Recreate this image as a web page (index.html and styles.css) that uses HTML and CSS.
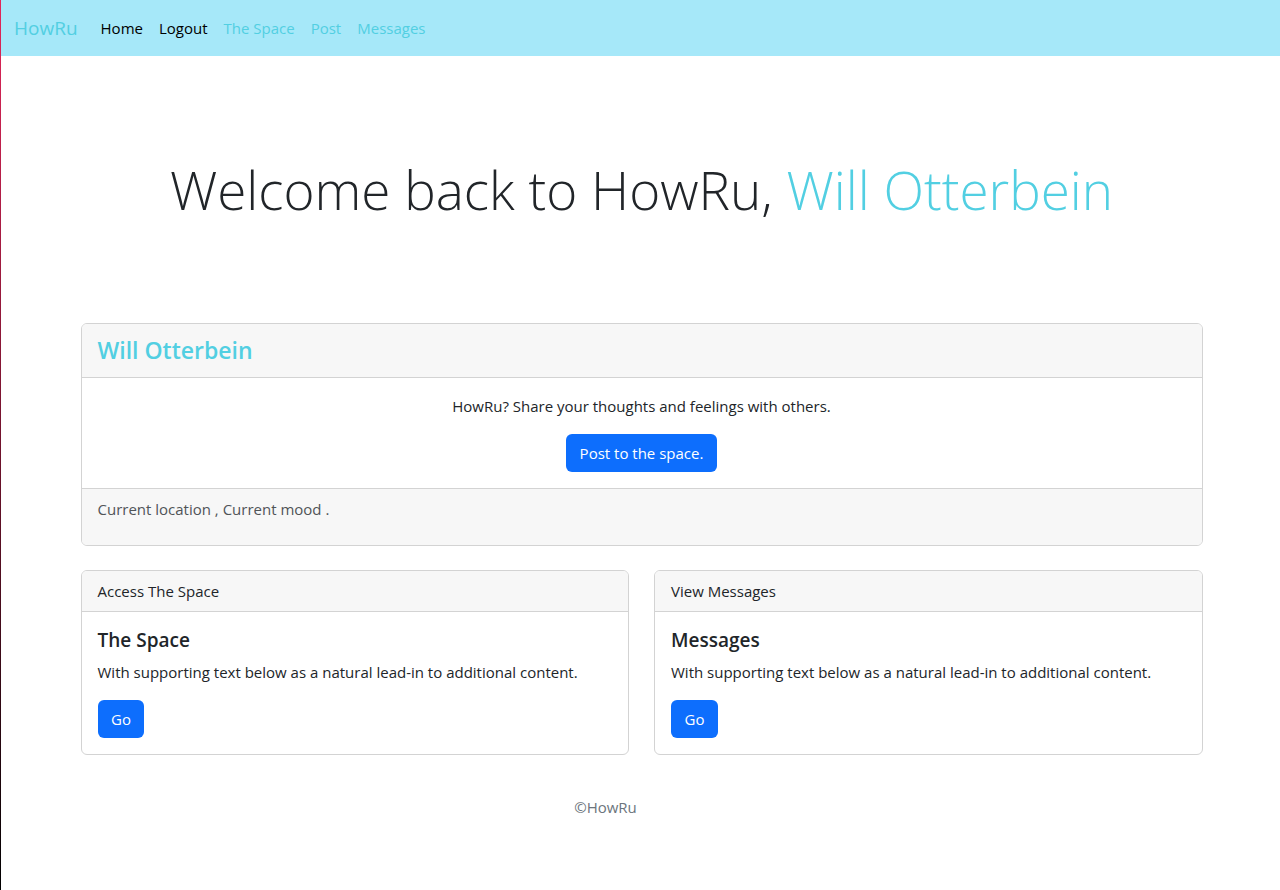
FILE: index.html
```html
<!DOCTYPE html>
<html lang="en">
<head>
<meta charset="utf-8">
<title>HowRu</title>
<link rel="stylesheet" href="styles.css">
</head>
<body>
<nav class="navbar">
  <a class="brand" href="#">HowRu</a>
  <ul class="nav-links">
    <li><a class="link dark" href="#">Home</a></li>
    <li><a class="link dark" href="#">Logout</a></li>
    <li><a class="link info" href="#">The Space</a></li>
    <li><a class="link info" href="#">Post</a></li>
    <li><a class="link info" href="#">Messages</a></li>
  </ul>
</nav>

<header class="hero">
  <h1 class="display">Welcome back to HowRu, <span class="info-text">Will Otterbein</span></h1>
</header>

<main class="container">
  <section class="card">
    <div class="card-header">
      <h3 class="user-name">Will Otterbein</h3>
    </div>
    <div class="card-body center">
      <p class="card-text">HowRu? Share your thoughts and feelings with others.</p>
      <a class="btn" href="#">Post to the space.</a>
    </div>
    <div class="card-footer">
      <p class="muted">Current location , Current mood .</p>
    </div>
  </section>

  <div class="row">
    <section class="card">
      <div class="card-header small">Access The Space</div>
      <div class="card-body">
        <h5 class="card-title">The Space</h5>
        <p class="card-text">With supporting text below as a natural lead-in to additional content.</p>
        <a class="btn" href="#">Go</a>
      </div>
    </section>
    <section class="card">
      <div class="card-header small">View Messages</div>
      <div class="card-body">
        <h5 class="card-title">Messages</h5>
        <p class="card-text">With supporting text below as a natural lead-in to additional content.</p>
        <a class="btn" href="#">Go</a>
      </div>
    </section>
  </div>
</main>

<footer class="site-footer">©HowRu</footer>
</body>
</html>
```

FILE: styles.css
```css
* { box-sizing: border-box; }

html, body { margin: 0; padding: 0; }

body {
  font-family: "Open Sans", "Noto Sans", "Liberation Sans", sans-serif;
  font-size: 15px;
  line-height: 24px;
  color: #212529;
  background: #fff linear-gradient(to bottom, #e3265a 0%, #000 100%) no-repeat left top / 1px 100%;
  min-height: 890px;
  padding-left: 3px;
}

a { text-decoration: none; }

.navbar {
  display: flex;
  align-items: center;
  height: 56px;
  background: #a6e8f9;
  padding: 0 12px 0 13px;
  margin-left: -2px;
}

.brand {
  font-size: 19px;
  color: #52cfe2;
  margin-right: 15px;
  line-height: 30px;
}

.nav-links {
  display: flex;
  list-style: none;
  margin: 0;
  padding: 0;
}

.link {
  display: block;
  padding: 8px;
  font-size: 15px;
}
.link.dark { color: #000; }
.link.info { color: #52cfe2; }

.info-text { color: #52cfe2; }

.hero {
  padding: 100px 0 100px;
  text-align: center;
}

.display {
  margin: 0;
  font-size: 53px;
  font-weight: 300;
  line-height: 67px;
  color: #212529;
}

.container {
  width: 1122px;
  margin: 0 auto;
}

.card {
  background: #fff;
  border: 1px solid #d3d3d3;
  border-radius: 6px;
  overflow: hidden;
  margin-bottom: 24px;
}

.card-header {
  background: #f7f7f7;
  border-bottom: 1px solid #d3d3d3;
  padding: 8px 16px;
}
.card-header.small { font-size: 15px; line-height: 24px; }

.user-name {
  margin: 0;
  font-size: 23px;
  font-weight: 600;
  line-height: 37px;
  color: #52cfe2;
}

.card-body { padding: 16px; }
.card-body.center { text-align: center; }

.card-title {
  margin: 0 0 8px;
  font-size: 19px;
  font-weight: 600;
  line-height: 24px;
}

.card-text { margin: 0 0 16px; }

.btn {
  display: inline-block;
  background: #0d6efd;
  color: #fff;
  border-radius: 6px;
  padding: 7px 13.5px;
  font-size: 15px;
  line-height: 24px;
}

.card-footer {
  background: #f7f7f7;
  border-top: 1px solid #d3d3d3;
  padding: 8px 16px;
}

.muted { margin: 0 0 16px; color: #505458; }

.row {
  display: grid;
  grid-template-columns: 1fr 1fr;
  gap: 25px;
}

.site-footer {
  text-align: center;
  color: #6c757d;
  font-size: 15px;
  padding-top: 16px;
  padding-right: 72px;
}
```
